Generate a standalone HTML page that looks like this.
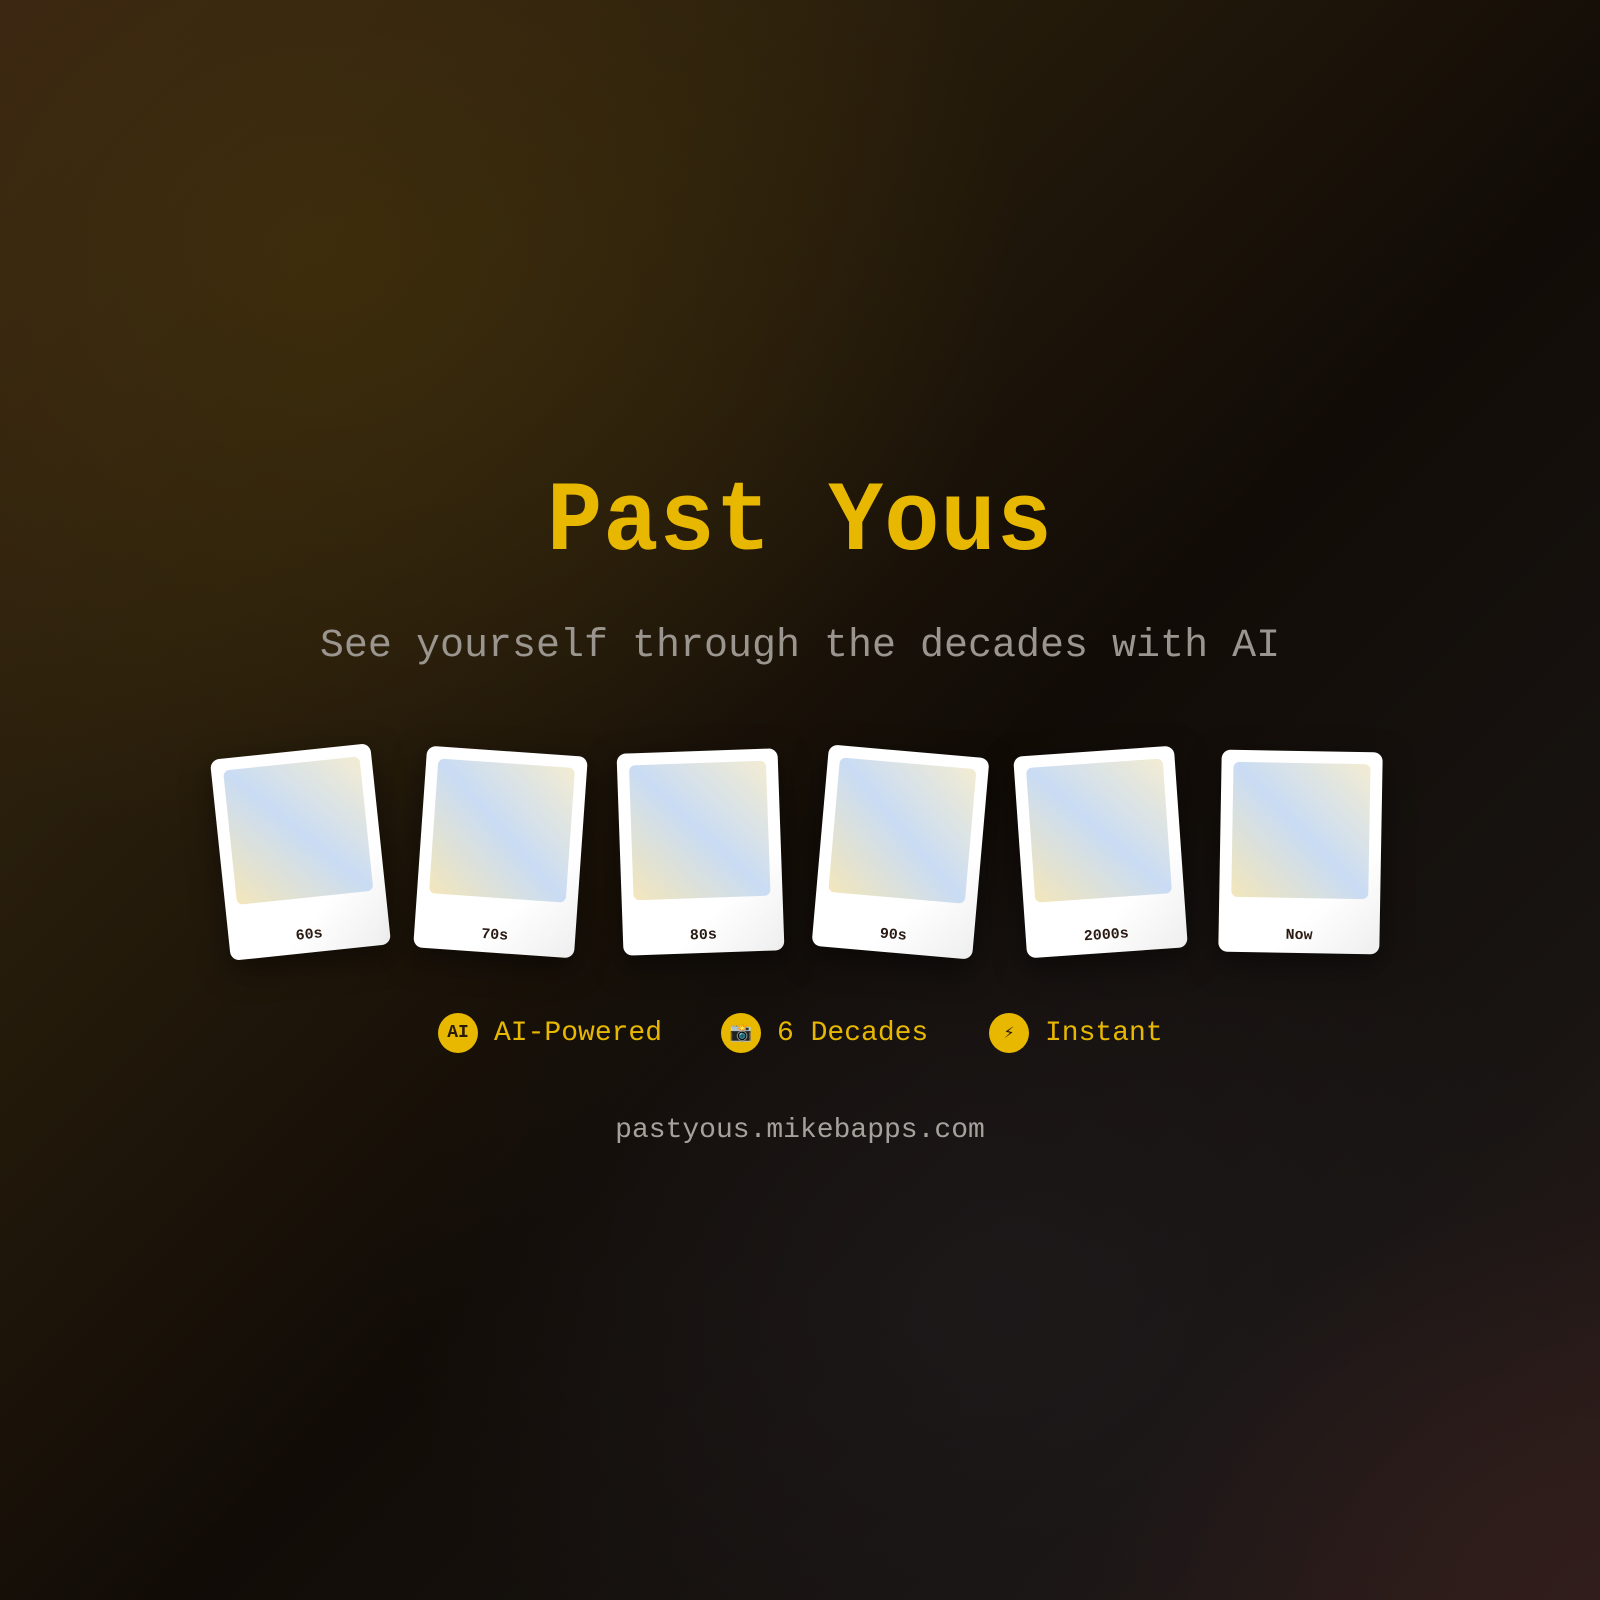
<!DOCTYPE html>
<html><head><style>
html,body{margin:0;width:1600px;height:1600px;overflow:hidden}
body{background:
radial-gradient(ellipse 700px 600px at 320px 250px,rgba(65,48,12,.8),rgba(65,48,12,0) 100%),
radial-gradient(ellipse 500px 400px at 1600px 1600px,rgba(50,30,28,.9),rgba(50,30,28,0)),
radial-gradient(ellipse 600px 500px at 1000px 1300px,rgba(30,26,28,.8),rgba(30,26,28,0)),
linear-gradient(135deg,#3a2415 0%,#2a1f0c 25%,#120c07 55%,#181412 80%,#2a1c1a 100%);
font-family:"Liberation Mono",monospace;position:relative}
.t{position:absolute;left:0;width:1600px;text-align:center}
h1{position:absolute;left:0;width:1600px;text-align:center;top:470px;margin:0;font-size:92px;font-weight:bold;color:#e8b800;transform:scaleY(1.08);letter-spacing:1px}
.sub{top:624px;font-size:40px;color:#9a958e}
.card{position:absolute;width:161px;height:202px;background:linear-gradient(135deg,#fff 70%,#eee);border-radius:9px;box-shadow:0 10px 30px rgba(0,0,0,.5)}
.card .p{position:absolute;left:12px;top:12px;width:137px;height:135px;border-radius:6px;background:linear-gradient(45deg,#f3e6bb 0%,#c9dcf4 50%,#f3ecd2 100%)}
.card .l{position:absolute;left:0;right:0;top:176px;text-align:center;font-weight:bold;font-size:15px;color:#2a1a12}
.f{position:absolute;top:1033px;display:flex;align-items:center;font-size:28px;color:#e8b800}
.c{width:40px;height:40px;border-radius:50%;background:#e8b800;color:#2a1a0a;font-size:18px;font-weight:bold;display:flex;align-items:center;justify-content:center;margin-right:16px}
.url{top:1115px;font-size:28px;color:#a5a19b}
</style></head><body>
<h1>Past Yous</h1>
<div class="t sub">See yourself through the decades with AI</div>
<div class="card" style="left:220px;top:751px;transform:rotate(-6deg)"><div class="p"></div><div class="l">60s</div></div>
<div class="card" style="left:420px;top:751px;transform:rotate(4deg)"><div class="p"></div><div class="l">70s</div></div>
<div class="card" style="left:620px;top:751px;transform:rotate(-2deg)"><div class="p"></div><div class="l">80s</div></div>
<div class="card" style="left:820px;top:751px;transform:rotate(5deg)"><div class="p"></div><div class="l">90s</div></div>
<div class="card" style="left:1020px;top:751px;transform:rotate(-4deg)"><div class="p"></div><div class="l">2000s</div></div>
<div class="card" style="left:1220px;top:751px;transform:rotate(1deg)"><div class="p"></div><div class="l">Now</div></div>
<div class="f" style="left:438px;transform:translateY(-50%)"><div class="c">AI</div>AI-Powered</div>
<div class="f" style="left:721px;transform:translateY(-50%)"><div class="c">📸</div>6 Decades</div>
<div class="f" style="left:989px;transform:translateY(-50%)"><div class="c">⚡</div>Instant</div>
<div class="t url">pastyous.mikebapps.com</div>
</body></html>
